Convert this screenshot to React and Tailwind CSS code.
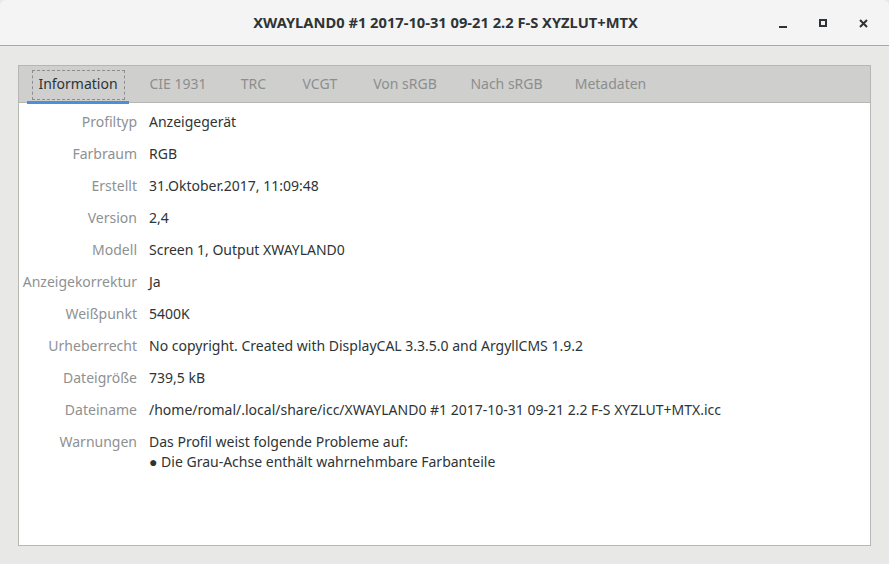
import React from 'react'

const tabs = [
  { label: 'Information', w: 'w-[102px]' },
  { label: 'CIE 1931', w: 'w-[82px]' },
  { label: 'TRC', w: 'w-[53px]' },
  { label: 'VCGT', w: 'w-[64px]' },
  { label: 'Von sRGB', w: 'w-[90px]' },
  { label: 'Nach sRGB', w: 'w-[97px]' },
  { label: 'Metadaten', w: 'w-[95px]' },
]

const rows = [
  ['Profiltyp', 'Anzeigegerät'],
  ['Farbraum', 'RGB'],
  ['Erstellt', '31.Oktober.2017, 11:09:48'],
  ['Version', '2,4'],
  ['Modell', 'Screen 1, Output XWAYLAND0'],
  ['Anzeigekorrektur', 'Ja'],
  ['Weißpunkt', '5400K'],
  ['Urheberrecht', 'No copyright. Created with DisplayCAL 3.3.5.0 and ArgyllCMS 1.9.2'],
  ['Dateigröße', '739,5 kB'],
  ['Dateiname', '/home/romal/.local/share/icc/XWAYLAND0 #1 2017-10-31 09-21 2.2 F-S XYZLUT+MTX.icc'],
]

const App = () => {
  return (
    <div className="w-[889px] h-[564px] flex flex-col bg-[#e8e8e7] overflow-hidden font-['Noto_Sans',sans-serif] text-[14px]">
      {/* Title bar */}
      <div className="h-[46px] shrink-0 flex items-center relative bg-[#f4f4f4] border-b border-[#a9a9a6] rounded-t-[6px]">
        <div className="flex-1 text-center font-bold text-[#2e3436] text-[14.7px] pl-[2px]">
          XWAYLAND0 #1 2017-10-31 09-21 2.2 F-S XYZLUT+MTX
        </div>
        <div className="absolute right-0 top-0 h-[46px] flex items-center">
          <div className="w-[40px] h-[46px] flex items-center justify-center">
            <div className="w-[8px] h-[2px] bg-[#2e3436] mt-[8px]" />
          </div>
          <div className="w-[40px] h-[46px] flex items-center justify-center">
            <div className="w-[8px] h-[8px] border-2 border-[#2e3436]" />
          </div>
          <div className="w-[40px] h-[46px] flex items-center justify-center mr-[6px]">
            <svg width="9" height="9" viewBox="0 0 9 9">
              <path d="M1 1 L8 8 M8 1 L1 8" stroke="#2e3436" strokeWidth="2" />
            </svg>
          </div>
        </div>
      </div>

      {/* Body */}
      <div className="flex-1 pt-[19px] pl-[18px] pr-[18px] pb-[18px] flex flex-col">
        <div className="flex-1 flex flex-col border border-[#b6b6b3]">
          {/* Tab header */}
          <div className="h-[37px] shrink-0 flex bg-[#cfcfcd] border-b border-[#b6b6b3] pl-[8px] gap-[8px]">
            {tabs.map((t, i) => (
              <div
                key={t.label}
                className={`${t.w} h-[37px] relative flex items-center justify-center ${
                  i === 0 ? 'text-[#2e3436]' : 'text-[#8b8e8f]'
                }`}
              >
                {i === 0 && (
                  <div className="absolute left-[5px] right-[4px] top-[4px] bottom-[3px] border border-dashed border-[#8b8e8f]" />
                )}
                <span className="pb-[2px]">{t.label}</span>
                {i === 0 && <div className="absolute left-0 right-0 bottom-[-1px] h-[3px] bg-[#4a90d9]" />}
              </div>
            ))}
          </div>

          {/* Content */}
          <div className="flex-1 bg-white pt-[2px]">
            <div className="grid grid-cols-[118px_1fr] gap-x-[12px]">
              {rows.map(([k, v]) => (
                <React.Fragment key={k}>
                  <div className="h-[32px] flex items-center justify-end text-[#8e9192] whitespace-nowrap">{k}</div>
                  <div className="h-[32px] flex items-center text-[#2e3436] whitespace-nowrap">{v}</div>
                </React.Fragment>
              ))}
              <div className="pt-[7px] text-right text-[#8e9192] leading-[20px]">Warnungen</div>
              <div className="pt-[7px] text-[#2e3436] leading-[20px]">
                <div>Das Profil weist folgende Probleme auf:</div>
                <div>● Die Grau-Achse enthält wahrnehmbare Farbanteile</div>
              </div>
            </div>
          </div>
        </div>
      </div>
    </div>
  )
}

export default App
